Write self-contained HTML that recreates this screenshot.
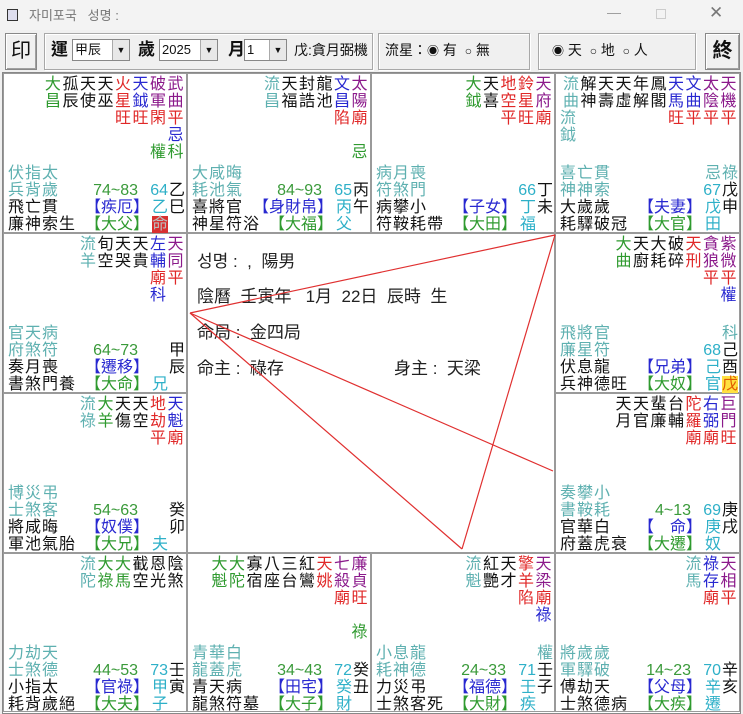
<!DOCTYPE html>
<html><head><meta charset="utf-8"><style>
*{box-sizing:border-box}
body{margin:0;width:743px;height:714px;background:#f0f0f0;position:relative;overflow:hidden;font-family:"Liberation Sans","Noto Sans CJK TC",sans-serif;color:#111}
.c{position:absolute;width:184px;height:160px;background:#fff;border:1px solid #9a9a9a}
.tp{position:absolute;right:1px;top:2px;text-align:right;font-size:16px;line-height:17px;letter-spacing:1.5px;white-space:pre}
.bl{position:absolute;left:4px;top:91px;font-size:16px;line-height:17px;letter-spacing:1px;white-space:pre}
.a{position:absolute;font-size:16px;line-height:17px;white-space:pre}
.y1{top:91px}.y2{top:108px}.y3{top:125px}.y4{top:142px}
.xa{right:48px}.xb{right:37px}.xc{right:18px}.xd{right:1px}
b{font-weight:normal}
.g{color:#2f9a2f}.t{color:#5eb0b0}.rd{color:#e02828}.b{color:#2828d0}.p{color:#8b1a8b}.cy{color:#2eb0c8}
.rg{color:#3a9a3a}
.box{position:absolute;border:1px solid #a8a8a8;box-shadow:inset 1px 1px 0 #fff,1px 1px 0 #fff}
.btn{position:absolute;border:1px solid #888;background:#f0f0f0;box-shadow:inset 1px 1px 0 #fff,inset -1px -1px 0 #a0a0a0;font-size:20px;text-align:center;line-height:34px}
.sel{position:absolute;top:39px;height:22px;background:#fff;border:1px solid #888;font-size:13px;line-height:20px;padding-left:2px}
.sel i{position:absolute;right:0;top:0;width:17px;height:20px;background:#e8e8e8;border-left:1px solid #aaa;font-style:normal;font-size:9px;text-align:center;line-height:20px}
.lb{position:absolute;top:38px;font-size:17px;font-weight:bold;line-height:24px}
.tx{position:absolute;top:40px;font-size:14px;line-height:20px}
.ct{position:absolute;font-family:"Liberation Sans","Noto Sans CJK KR",sans-serif;font-size:17px;line-height:22px;color:#222;white-space:pre}
</style></head><body>
<!-- title bar -->
<div style="position:absolute;left:0;top:0;width:743px;height:30px;background:#f3f3f3"></div>
<div style="position:absolute;left:7px;top:9px;width:11px;height:12px;border:1px solid #333;background:#dde"></div>
<div style="position:absolute;left:29px;top:5px;font-size:13px;color:#777;font-family:'Liberation Sans','Noto Sans CJK KR',sans-serif">자미포국&nbsp;&nbsp;&nbsp;성명 :</div>
<div style="position:absolute;left:607px;top:4px;font-size:14px;color:#999">—</div>
<div style="position:absolute;left:656px;top:9px;width:10px;height:10px;border:1px solid #ccc"></div>
<div style="position:absolute;left:709px;top:3px;font-size:17px;color:#777">✕</div>
<!-- toolbar -->
<div class="btn" style="left:5px;top:33px;width:32px;height:37px">印</div>
<div class="box" style="left:44px;top:33px;width:329px;height:37px"></div>
<div class="lb" style="left:51px">運</div>
<div class="sel" style="left:72px;width:58px">甲辰<i>▼</i></div>
<div class="lb" style="left:138px">歲</div>
<div class="sel" style="left:159px;width:59px">2025<i>▼</i></div>
<div class="lb" style="left:228px">月</div>
<div class="sel" style="left:244px;width:43px">1<i>▼</i></div>
<div class="tx" style="left:294px">戊:貪月弼機</div>
<div class="box" style="left:378px;top:33px;width:152px;height:37px"></div>
<div class="tx" style="left:385px">流星：<span style="font-size:12px">◉</span> 有 &nbsp;<span style="font-size:12px">○</span> 無</div>
<div class="box" style="left:538px;top:33px;width:158px;height:37px"></div>
<div class="tx" style="left:552px"><span style="font-size:12px">◉</span> 天 &nbsp;<span style="font-size:12px">○</span> 地 &nbsp;<span style="font-size:12px">○</span> 人</div>
<div class="btn" style="left:705px;top:33px;width:35px;height:37px;font-weight:bold">終</div>

<!-- chart -->
<div style="position:absolute;left:2px;top:72px;width:739px;height:642px;background:#fff;border:1px solid #888"></div>

<!-- C1 -->
<div class="c" style="left:3px;top:73px">
<div class="tp"><div><b class="g">大</b>孤天天<b class="rd">火</b><b class="b">天</b><b class="p">破武</b></div><div><b class="g">昌</b>辰使巫<b class="rd">星</b><b class="b">鉞</b><b class="p">軍曲</b></div><div class="rd">旺旺閑平</div><div class="b">忌</div><div class="g">權科</div></div>
<div class="bl"><div class="t">伏指太</div><div class="t">兵背歲</div><div>飛亡貫</div><div>廉神索生</div></div>
<div class="a y2 xa rg">74~83</div><div class="a y2 xc cy">64</div><div class="a y2 xd">乙</div>
<div class="a y3 xb b">【疾厄】</div><div class="a y3 xc cy">乙</div><div class="a y3 xd">巳</div>
<div class="a y4 xb g">【大父】</div><div class="a y4 xc" style="background:#d83030;color:#bbb">命</div>
</div>
<!-- C2 -->
<div class="c" style="left:187px;top:73px">
<div class="tp"><div><b class="t">流</b>天封龍<b class="b">文</b><b class="p">太</b></div><div><b class="t">昌</b>福誥池<b class="b">昌</b><b class="p">陽</b></div><div class="rd">陷廟</div><div> </div><div class="g">忌</div></div>
<div class="bl"><div class="t">大咸晦</div><div class="t">耗池氣</div><div>喜將官</div><div>神星符浴</div></div>
<div class="a y2 xa rg">84~93</div><div class="a y2 xc cy">65</div><div class="a y2 xd">丙</div>
<div class="a y3 xb b">【身財帛】</div><div class="a y3 xc cy">丙</div><div class="a y3 xd">午</div>
<div class="a y4 xb g">【大福】</div><div class="a y4 xc cy">父</div>
</div>
<!-- C3 -->
<div class="c" style="left:371px;top:73px">
<div class="tp"><div><b class="g">大</b>天<b class="rd">地鈴</b><b class="p">天</b></div><div><b class="g">鉞</b>喜<b class="rd">空星</b><b class="p">府</b></div><div class="rd">平旺廟</div></div>
<div class="bl"><div class="t">病月喪</div><div class="t">符煞門</div><div>病攀小</div><div>符鞍耗帶</div></div>
<div class="a y2 xc cy">66</div><div class="a y2 xd">丁</div>
<div class="a y3 xb b">【子女】</div><div class="a y3 xc cy">丁</div><div class="a y3 xd">未</div>
<div class="a y4 xb g">【大田】</div><div class="a y4 xc cy">福</div>
</div>
<!-- C4 -->
<div class="c" style="left:555px;top:73px;width:185px">
<div class="tp"><div><b class="t">流</b>解天天年鳳<b class="b">天文</b><b class="p">太天</b></div><div><b class="t">曲</b>神壽虛解閣<b class="b">馬曲</b><b class="p">陰機</b></div><div class="rd">旺平平平</div></div>
<div class="a t" style="left:4px;top:36px;font-size:16px;line-height:17px">流<br>鉞</div>
<div class="bl"><div class="t">喜亡貫</div><div class="t">神神索</div><div>大歲歲</div><div>耗驛破冠</div></div>
<div class="a y1 xc t">忌</div><div class="a y1 xd t">祿</div>
<div class="a y2 xc cy">67</div><div class="a y2 xd">戊</div>
<div class="a y3 xb b">【夫妻】</div><div class="a y3 xc cy">戊</div><div class="a y3 xd">申</div>
<div class="a y4 xb g">【大官】</div><div class="a y4 xc cy">田</div>
</div>
<!-- C5 -->
<div class="c" style="left:3px;top:233px">
<div class="tp"><div><b class="t">流</b>旬天天<b class="b">左</b><b class="p">天</b></div><div><b class="t">羊</b>空哭貴<b class="b">輔</b><b class="p">同</b></div><div class="rd">廟平</div><div class="b">科　</div></div>
<div class="bl"><div class="t">官天病</div><div class="t">府煞符</div><div>奏月喪</div><div>書煞門養</div></div>
<div class="a y2 xa rg">64~73</div><div class="a y2 xd">甲</div>
<div class="a y3 xb b">【遷移】</div><div class="a y3 xd">辰</div>
<div class="a y4 xb g">【大命】</div><div class="a y4 xc cy">兄</div>
</div>
<!-- center -->
<div class="c" style="left:187px;top:233px;width:368px;height:320px"></div>
<div class="ct" style="left:197px;top:251px">성명 :  ,  陽男</div>
<div class="ct" style="left:197px;top:286px">陰曆  壬寅年   1月  22日  辰時  生</div>
<div class="ct" style="left:197px;top:322px">命局 :  金四局</div>
<div class="ct" style="left:197px;top:358px">命主 :  祿存</div>
<div class="ct" style="left:394px;top:358px">身主 :  天梁</div>
<!-- C6 -->
<div class="c" style="left:555px;top:233px;width:185px">
<div class="tp"><div><b class="g">大</b>天大破<b class="rd">天</b><b class="p">貪紫</b></div><div><b class="g">曲</b>廚耗碎<b class="rd">刑</b><b class="p">狼微</b></div><div class="rd">平平</div><div class="b">權</div></div>
<div class="bl"><div class="t">飛將官</div><div class="t">廉星符</div><div>伏息龍</div><div>兵神德旺</div></div>
<div class="a y1 xd t">科</div>
<div class="a y2 xc cy">68</div><div class="a y2 xd">己</div>
<div class="a y3 xb b">【兄弟】</div><div class="a y3 xc cy">己</div><div class="a y3 xd">酉</div>
<div class="a y4 xb g">【大奴】</div><div class="a y4 xc cy">官</div><div class="a y4 xd" style="background:#ffe040;color:#e05a00">戊</div>
</div>
<!-- C7 -->
<div class="c" style="left:3px;top:393px">
<div class="tp"><div><b class="t">流</b><b class="g">大</b>天天<b class="rd">地</b><b class="b">天</b></div><div><b class="t">祿</b><b class="g">羊</b>傷空<b class="rd">劫</b><b class="b">魁</b></div><div class="rd">平廟</div></div>
<div class="bl"><div class="t">博災弔</div><div class="t">士煞客</div><div>將咸晦</div><div>軍池氣胎</div></div>
<div class="a y2 xa rg">54~63</div><div class="a y2 xd">癸</div>
<div class="a y3 xb b">【奴僕】</div><div class="a y3 xd">卯</div>
<div class="a y4 xb g">【大兄】</div><div class="a y4 xc cy">夫</div>
</div>
<!-- C8 -->
<div class="c" style="left:555px;top:393px;width:185px">
<div class="tp"><div>天天蜚台<b class="rd">陀</b><b class="b">右</b><b class="p">巨</b></div><div>月官廉輔<b class="rd">羅</b><b class="b">弼</b><b class="p">門</b></div><div class="rd">廟廟旺</div></div>
<div class="bl"><div class="t">奏攀小</div><div class="t">書鞍耗</div><div>官華白</div><div>府蓋虎衰</div></div>
<div class="a y2 xa rg">4~13</div><div class="a y2 xc cy">69</div><div class="a y2 xd">庚</div>
<div class="a y3 xb b">【　命】</div><div class="a y3 xc cy">庚</div><div class="a y3 xd">戌</div>
<div class="a y4 xb g">【大遷】</div><div class="a y4 xc cy">奴</div>
</div>
<!-- C9 -->
<div class="c" style="left:3px;top:553px;height:159px">
<div class="tp"><div><b class="t">流</b><b class="g">大大</b>截恩陰</div><div><b class="t">陀</b><b class="g">祿馬</b>空光煞</div></div>
<div class="bl"><div class="t">力劫天</div><div class="t">士煞德</div><div>小指太</div><div>耗背歲絕</div></div>
<div class="a y2 xa rg">44~53</div><div class="a y2 xc cy">73</div><div class="a y2 xd">壬</div>
<div class="a y3 xb b">【官祿】</div><div class="a y3 xc cy">甲</div><div class="a y3 xd">寅</div>
<div class="a y4 xb g">【大夫】</div><div class="a y4 xc cy">子</div>
</div>
<!-- C10 -->
<div class="c" style="left:187px;top:553px;height:159px">
<div class="tp"><div><b class="g">大大</b>寡八三紅<b class="rd">天</b><b class="p">七廉</b></div><div><b class="g">魁陀</b>宿座台鸞<b class="rd">姚</b><b class="p">殺貞</b></div><div class="rd">廟旺</div><div> </div><div class="g">祿</div></div>
<div class="bl"><div class="t">青華白</div><div class="t">龍蓋虎</div><div>青天病</div><div>龍煞符墓</div></div>
<div class="a y2 xa rg">34~43</div><div class="a y2 xc cy">72</div><div class="a y2 xd">癸</div>
<div class="a y3 xb b">【田宅】</div><div class="a y3 xc cy">癸</div><div class="a y3 xd">丑</div>
<div class="a y4 xb g">【大子】</div><div class="a y4 xc cy">財</div>
</div>
<!-- C11 -->
<div class="c" style="left:371px;top:553px;height:159px">
<div class="tp"><div><b class="t">流</b>紅天<b class="rd">擎</b><b class="p">天</b></div><div><b class="t">魁</b>艷才<b class="rd">羊</b><b class="p">梁</b></div><div class="rd">陷廟</div><div class="b">祿</div></div>
<div class="bl"><div class="t">小息龍</div><div class="t">耗神德</div><div>力災弔</div><div>士煞客死</div></div>
<div class="a y1 xd t">權</div>
<div class="a y2 xa rg">24~33</div><div class="a y2 xc cy">71</div><div class="a y2 xd">壬</div>
<div class="a y3 xb b">【福德】</div><div class="a y3 xc cy">壬</div><div class="a y3 xd">子</div>
<div class="a y4 xb g">【大財】</div><div class="a y4 xc cy">疾</div>
</div>
<!-- C12 -->
<div class="c" style="left:555px;top:553px;width:185px;height:159px">
<div class="tp"><div><b class="t">流</b><b class="b">祿</b><b class="p">天</b></div><div><b class="t">馬</b><b class="b">存</b><b class="p">相</b></div><div class="rd">廟平</div></div>
<div class="bl"><div class="t">將歲歲</div><div class="t">軍驛破</div><div>傅劫天</div><div>士煞德病</div></div>
<div class="a y2 xa rg">14~23</div><div class="a y2 xc cy">70</div><div class="a y2 xd">辛</div>
<div class="a y3 xb b">【父母】</div><div class="a y3 xc cy">辛</div><div class="a y3 xd">亥</div>
<div class="a y4 xb g">【大疾】</div><div class="a y4 xc cy">遷</div>
</div>

<svg style="position:absolute;left:0;top:0" width="743" height="714">
<g stroke="#e03030" stroke-width="1.2" fill="none">
<line x1="555" y1="235" x2="190" y2="313"/>
<line x1="190" y1="313" x2="462" y2="549"/>
<line x1="190" y1="313" x2="553" y2="471"/>
<line x1="555" y1="235" x2="462" y2="549"/>
</g></svg>
</body></html>
